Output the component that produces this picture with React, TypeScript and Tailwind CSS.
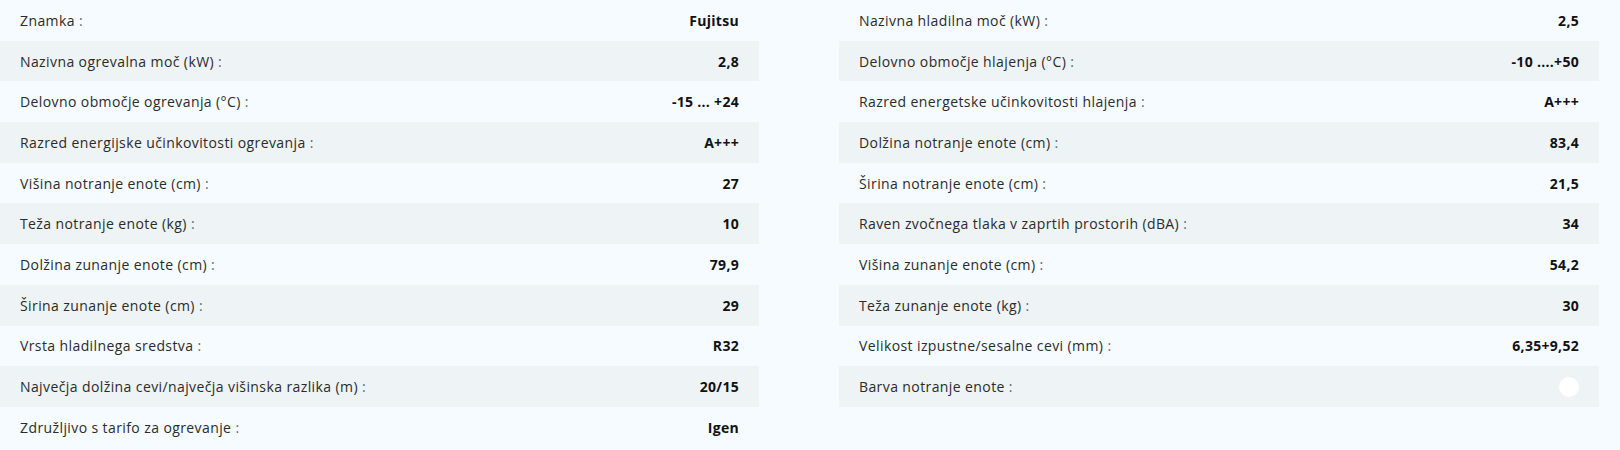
import React from "react";

const left: [string, string][] = [
  ["Znamka", "Fujitsu"],
  ["Nazivna ogrevalna moč (kW)", "2,8"],
  ["Delovno območje ogrevanja (°C)", "-15 ... +24"],
  ["Razred energijske učinkovitosti ogrevanja", "A+++"],
  ["Višina notranje enote (cm)", "27"],
  ["Teža notranje enote (kg)", "10"],
  ["Dolžina zunanje enote (cm)", "79,9"],
  ["Širina zunanje enote (cm)", "29"],
  ["Vrsta hladilnega sredstva", "R32"],
  ["Največja dolžina cevi/največja višinska razlika (m)", "20/15"],
  ["Združljivo s tarifo za ogrevanje", "Igen"],
];

const right: [string, string | null][] = [
  ["Nazivna hladilna moč (kW)", "2,5"],
  ["Delovno območje hlajenja (°C)", "-10 ....+50"],
  ["Razred energetske učinkovitosti hlajenja", "A+++"],
  ["Dolžina notranje enote (cm)", "83,4"],
  ["Širina notranje enote (cm)", "21,5"],
  ["Raven zvočnega tlaka v zaprtih prostorih (dBA)", "34"],
  ["Višina zunanje enote (cm)", "54,2"],
  ["Teža zunanje enote (kg)", "30"],
  ["Velikost izpustne/sesalne cevi (mm)", "6,35+9,52"],
  ["Barva notranje enote", null],
];

function Row({ label, value, i }: { label: string; value: string | null; i: number }) {
  return (
    <div
      className={`flex items-center justify-between h-[40.7px] px-5 ${
        i % 2 === 1 ? "bg-[#eef3f5]" : ""
      }`}
    >
      <span className="text-[14px] tracking-[0.4px] text-[#2b2b2b]">
        {label} <span className="text-[#666]">:</span>
      </span>
      {value === null ? (
        <span className="w-5 h-5 rounded-full bg-white" />
      ) : (
        <span className="text-[14px] tracking-[0.3px] font-bold text-[#111]">{value}</span>
      )}
    </div>
  );
}

export default function App() {
  return (
    <div
      className="w-[1620px] h-[450px] bg-[#f5fbfe] flex gap-[80px] overflow-hidden"
      style={{ fontFamily: "'Open Sans', 'Noto Sans', sans-serif" }}
    >
      <div className="w-[759px] flex flex-col">
        {left.map(([l, v], i) => (
          <Row key={i} label={l} value={v} i={i} />
        ))}
      </div>
      <div className="w-[760px] flex flex-col">
        {right.map(([l, v], i) => (
          <Row key={i} label={l} value={v} i={i} />
        ))}
      </div>
    </div>
  );
}
